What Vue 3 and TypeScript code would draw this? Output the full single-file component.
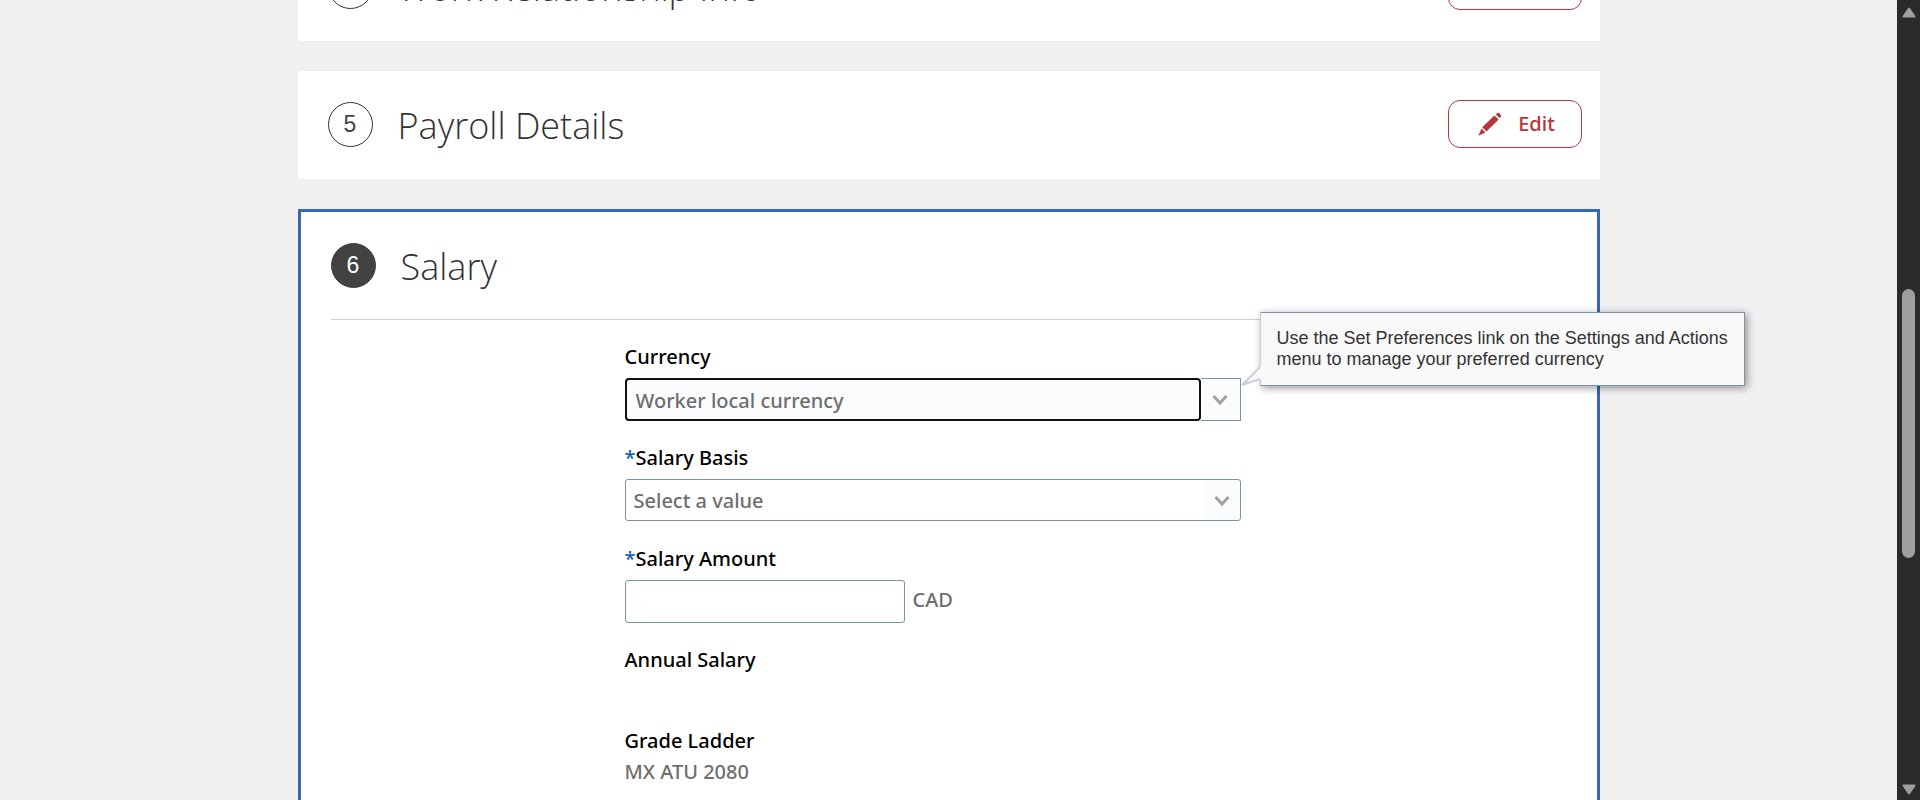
<script setup lang="ts">
import { ref } from 'vue'

interface Step {
  number: number
  title: string
}

const completedSteps: Step[] = [
  { number: 4, title: 'Work Relationship Info' },
  { number: 5, title: 'Payroll Details' },
]

const currency = ref('Worker local currency')
const salaryBasis = ref('')
const salaryAmount = ref('')
const thumb = { start: 35.4, size: 35.1 }
</script>

<template>
  <div class="window">
    <main class="page">
      <div class="steps">
        <section v-for="step in completedSteps" :key="step.number" class="card">
          <span class="badge">{{ step.number }}</span>
          <h2 class="title">{{ step.title }}</h2>
          <button type="button" class="edit">
            <svg class="pencil" viewBox="0 0 24 24" aria-hidden="true">
              <path d="M17.8 2.6 19.3 1.1Q20.2.3 21.1 1.1L22.9 2.9Q23.7 3.8 22.9 4.7L21.5 6.1Z" />
              <path d="M16.4 3.5 20.6 7.6 8.5 19.5 4.2 15.3Z" />
              <path d="M3.5 16.5 7.4 20.4.4 23.7Z" />
            </svg>
            <span>Edit</span>
          </button>
        </section>

        <section class="card-active">
          <header class="active-head">
            <span class="badge badge-filled">6</span>
            <h2 class="title">Salary</h2>
          </header>

          <form class="form" @submit.prevent>
            <div class="field">
              <label class="label" for="currency">Currency</label>
              <div class="combo">
                <input id="currency" v-model="currency" class="combo-input" type="text" aria-describedby="currency-hint" />
                <button type="button" class="combo-button" aria-label="Show currencies">
                  <svg class="chevron" viewBox="0 0 16 12" aria-hidden="true"><path d="M1.5 2 8 9 14.5 2" /></svg>
                </button>
                <div id="currency-hint" class="hint" role="tooltip">
                  <svg class="hint-tail" viewBox="0 0 20 20" aria-hidden="true">
                    <path class="tail-fill" d="M20 0 1 19 20 13Z" />
                    <path class="tail-line" d="M19 1 1 19 19 13" />
                  </svg>
                  Use the Set Preferences link on the Settings and Actions menu to manage your preferred currency
                </div>
              </div>
            </div>

            <div class="field">
              <label class="label" for="basis"><span class="star">*</span>Salary Basis</label>
              <div class="select-wrap">
                <select id="basis" v-model="salaryBasis" class="select" required>
                  <option value="">Select a value</option>
                </select>
                <svg class="chevron select-chevron" viewBox="0 0 16 12" aria-hidden="true"><path d="M1.5 2 8 9 14.5 2" /></svg>
              </div>
            </div>

            <div class="field">
              <label class="label" for="amount"><span class="star">*</span>Salary Amount</label>
              <div class="amount-row">
                <input id="amount" v-model="salaryAmount" class="amount" type="text" required />
                <span class="unit">CAD</span>
              </div>
            </div>

            <dl class="facts">
              <div class="fact">
                <dt class="label">Annual Salary</dt>
                <dd class="value"></dd>
              </div>
              <div class="fact">
                <dt class="label">Grade Ladder</dt>
                <dd class="value">MX ATU 2080</dd>
              </div>
            </dl>
          </form>
        </section>
      </div>
    </main>

    <div class="scrollbar" aria-hidden="true">
      <svg class="arrow" viewBox="0 0 14 11"><path d="M7 1.5 12.5 9.5H1.5Z" /></svg>
      <div class="track">
        <div class="thumb" :style="{ top: thumb.start + '%', height: thumb.size + '%' }"></div>
      </div>
      <svg class="arrow" viewBox="0 0 14 11"><path d="M7 9.5 12.5 1.5H1.5Z" /></svg>
    </div>
  </div>
</template>

<style>
body {
  margin: 0;
}
</style>

<style scoped>
* {
  box-sizing: border-box;
}

.window {
  display: flex;
  height: 100vh;
  overflow: hidden;
  background: #f0f0f0;
  color: #6e6e6e;
  font-family: "Noto Sans", "Open Sans", sans-serif;
  font-size: 20px;
  font-weight: 500;
  line-height: 28px;
}

.page {
  flex: 1;
  min-width: 0;
  overflow: hidden;
}

/* The page is scrolled part of the way down. */
.steps {
  display: flex;
  flex-direction: column;
  gap: 30px;
  max-width: 1302px;
  margin: -67px auto 0;
}

.card {
  display: flex;
  align-items: center;
  gap: 25px;
  padding: 29px 18px 31px 30px;
  background: #fff;
}

.card-active {
  border: 3px solid #3569b5;
  padding: 0 30px 40px;
  background: #fff;
  min-height: 700px;
}

.active-head {
  display: flex;
  align-items: center;
  gap: 25px;
  padding: 29px 0 30px;
  border-bottom: 1px solid #d0d0d0;
}

.badge {
  flex: none;
  display: flex;
  align-items: center;
  justify-content: center;
  width: 45px;
  height: 45px;
  border: 1px solid #333;
  border-radius: 50%;
  color: #424242;
  font-family: "Liberation Sans", Arial, sans-serif;
  font-size: 23px;
  font-weight: 400;
}

.badge-filled {
  border-color: #424242;
  background: #424242;
  color: #fff;
}

.title {
  flex: 1;
  margin: 0;
  padding-top: 3px;
  color: #333;
  font-family: "Open Sans", "Noto Sans", sans-serif;
  font-size: 36px;
  font-weight: 300;
  line-height: 45px;
}

.edit {
  display: flex;
  align-items: center;
  justify-content: center;
  gap: 16px;
  width: 134px;
  height: 48px;
  padding: 0 0 0 4px;
  border: 1px solid #b83539;
  border-radius: 12px;
  background: #fff;
  color: #b83539;
  font: inherit;
}

.pencil {
  width: 24px;
  height: 24px;
  fill: currentColor;
}

.form {
  width: 616px;
  margin: 23px auto 0 294px;
}

.field {
  min-height: 78px;
  margin-bottom: 23px;
}

.label {
  display: block;
  margin-bottom: 7px;
  color: #000;
}

.star {
  color: #0a64b0;
}

.combo {
  position: relative;
  display: flex;
  height: 43px;
}

.combo-input,
.select,
.amount {
  border: 1px solid #7c93a1;
  border-radius: 3px;
  color: #6e6e6e;
  font: inherit;
  outline: none;
}

.combo-input {
  flex: 1;
  min-width: 0;
  padding: 2px 9px 0;
  border: 2px solid #111;
  border-radius: 4px;
  background: #fbfcfe;
}

.combo-button {
  display: flex;
  align-items: center;
  justify-content: center;
  width: 40px;
  padding: 0;
  border: 1px solid #7c93a1;
  border-left: 0;
  background: #fbfcfe;
}

.chevron {
  width: 16px;
  height: 12px;
  fill: none;
  stroke: #a3a3a3;
  stroke-width: 3;
}

.hint {
  position: absolute;
  left: calc(100% + 19px);
  bottom: 35px;
  width: 485px;
  padding: 15px 12px 15px 16px;
  border: 1px solid #7c93a9;
  border-left-color: #c5ccd5;
  background: #f9f9f9;
  box-shadow: 2px 2px 8px rgba(0, 0, 0, 0.4);
  color: #333;
  font-family: "Liberation Sans", Arial, sans-serif;
  font-size: 18px;
  font-weight: 400;
  line-height: 21px;
}

.hint-tail {
  position: absolute;
  left: -20px;
  bottom: -1px;
  width: 20px;
  height: 20px;
}

.tail-fill {
  fill: #f9f9f9;
}

.tail-line {
  fill: none;
  stroke: #c9d0d8;
  stroke-width: 2;
}

.select-wrap {
  position: relative;
}

.select {
  display: block;
  appearance: none;
  width: 100%;
  height: 42px;
  padding: 2px 40px 0 8px;
  background: linear-gradient(to left, #fbfcfe 36px, #fff 36px);
}

.select-chevron {
  position: absolute;
  top: 16px;
  right: 11px;
  pointer-events: none;
}

.amount-row {
  display: flex;
  align-items: center;
  gap: 8px;
}

.amount {
  width: 280px;
  height: 43px;
  padding: 0 8px;
  background: #fff;
}

.unit {
  padding-bottom: 4px;
}

.facts {
  margin: 0;
}

.fact {
  margin-bottom: 22px;
}

.fact .label {
  margin-bottom: 3px;
}

.value {
  min-height: 28px;
  margin: 0;
}

.scrollbar {
  flex: none;
  display: flex;
  flex-direction: column;
  align-items: center;
  width: 23px;
  padding: 7px 0 5px;
  background: #2b2b2b;
}

.arrow {
  width: 14px;
  height: 11px;
  fill: #9f9f9f;
  stroke: #9f9f9f;
  stroke-width: 2;
  stroke-linejoin: round;
}

.track {
  position: relative;
  flex: 1;
  width: 13px;
}

.thumb {
  position: absolute;
  left: 0;
  width: 100%;
  border-radius: 7px;
  background: #9f9f9f;
}
</style>
